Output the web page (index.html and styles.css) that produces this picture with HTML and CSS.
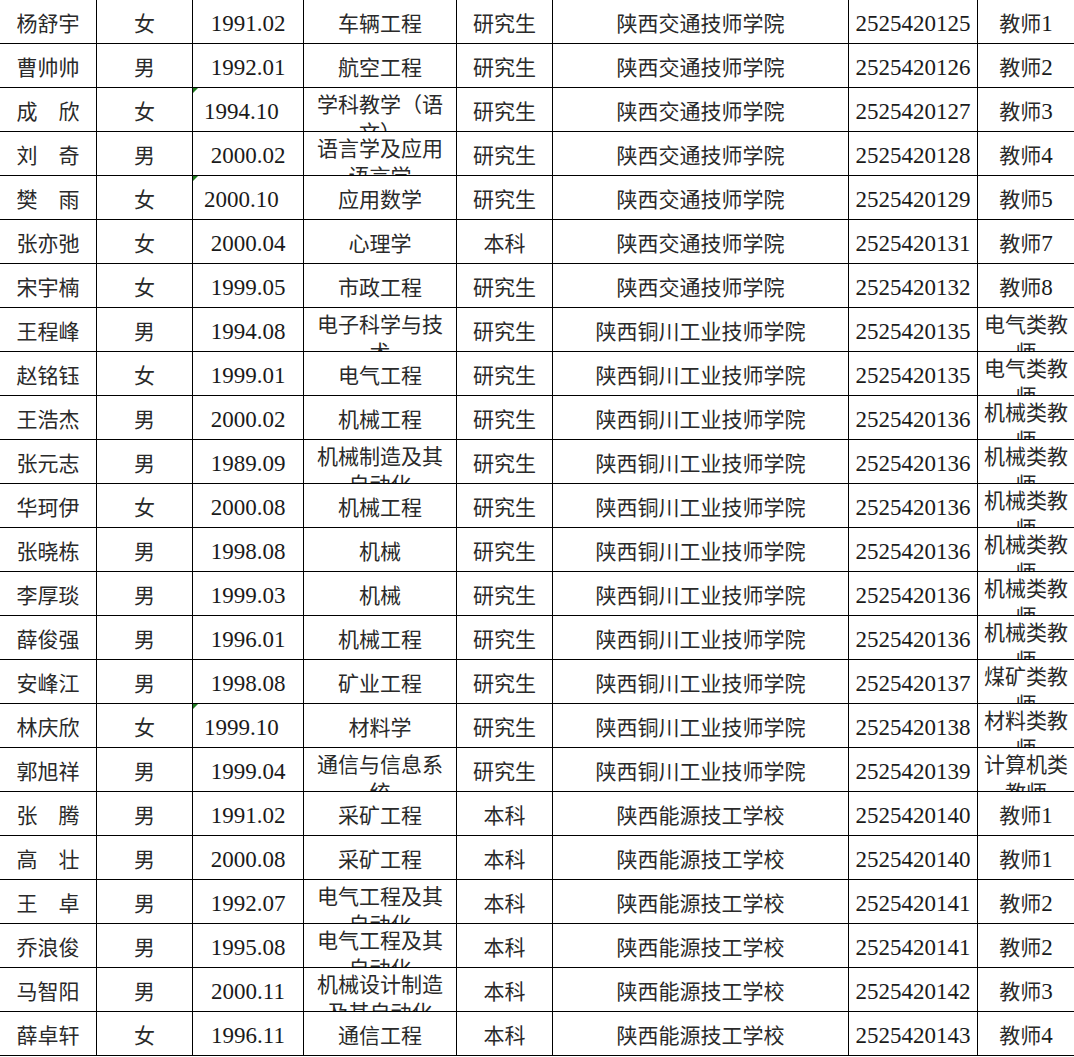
FILE: index.html
```html
<!DOCTYPE html>
<html lang="zh-CN">
<head>
<meta charset="utf-8">
<title>名单</title>
<link rel="stylesheet" href="styles.css">
</head>
<body>
<div class="sheet">
  <div class="row"><div class="c">杨舒宇</div><div class="c">女</div><div class="c"><span class="num">1991.02</span></div><div class="c">车辆工程</div><div class="c">研究生</div><div class="c">陕西交通技师学院</div><div class="c"><span class="num">2525420125</span></div><div class="c">教师<span class="num">1</span></div></div>
  <div class="row"><div class="c">曹帅帅</div><div class="c">男</div><div class="c"><span class="num">1992.01</span></div><div class="c">航空工程</div><div class="c">研究生</div><div class="c">陕西交通技师学院</div><div class="c"><span class="num">2525420126</span></div><div class="c">教师<span class="num">2</span></div></div>
  <div class="row"><div class="c">成　欣</div><div class="c">女</div><div class="c left"><span class="num">1994.10</span></div><div class="c wrap">学科教学（语文）</div><div class="c">研究生</div><div class="c">陕西交通技师学院</div><div class="c"><span class="num">2525420127</span></div><div class="c">教师<span class="num">3</span></div></div>
  <div class="row"><div class="c">刘　奇</div><div class="c">男</div><div class="c"><span class="num">2000.02</span></div><div class="c wrap">语言学及应用语言学</div><div class="c">研究生</div><div class="c">陕西交通技师学院</div><div class="c"><span class="num">2525420128</span></div><div class="c">教师<span class="num">4</span></div></div>
  <div class="row"><div class="c">樊　雨</div><div class="c">女</div><div class="c left"><span class="num">2000.10</span></div><div class="c">应用数学</div><div class="c">研究生</div><div class="c">陕西交通技师学院</div><div class="c"><span class="num">2525420129</span></div><div class="c">教师<span class="num">5</span></div></div>
  <div class="row"><div class="c">张亦弛</div><div class="c">女</div><div class="c"><span class="num">2000.04</span></div><div class="c">心理学</div><div class="c">本科</div><div class="c">陕西交通技师学院</div><div class="c"><span class="num">2525420131</span></div><div class="c">教师<span class="num">7</span></div></div>
  <div class="row"><div class="c">宋宇楠</div><div class="c">女</div><div class="c"><span class="num">1999.05</span></div><div class="c">市政工程</div><div class="c">研究生</div><div class="c">陕西交通技师学院</div><div class="c"><span class="num">2525420132</span></div><div class="c">教师<span class="num">8</span></div></div>
  <div class="row"><div class="c">王程峰</div><div class="c">男</div><div class="c"><span class="num">1994.08</span></div><div class="c wrap">电子科学与技术</div><div class="c">研究生</div><div class="c">陕西铜川工业技师学院</div><div class="c"><span class="num">2525420135</span></div><div class="c wrap">电气类教师</div></div>
  <div class="row"><div class="c">赵铭钰</div><div class="c">女</div><div class="c"><span class="num">1999.01</span></div><div class="c">电气工程</div><div class="c">研究生</div><div class="c">陕西铜川工业技师学院</div><div class="c"><span class="num">2525420135</span></div><div class="c wrap">电气类教师</div></div>
  <div class="row"><div class="c">王浩杰</div><div class="c">男</div><div class="c"><span class="num">2000.02</span></div><div class="c">机械工程</div><div class="c">研究生</div><div class="c">陕西铜川工业技师学院</div><div class="c"><span class="num">2525420136</span></div><div class="c wrap">机械类教师</div></div>
  <div class="row"><div class="c">张元志</div><div class="c">男</div><div class="c"><span class="num">1989.09</span></div><div class="c wrap">机械制造及其自动化</div><div class="c">研究生</div><div class="c">陕西铜川工业技师学院</div><div class="c"><span class="num">2525420136</span></div><div class="c wrap">机械类教师</div></div>
  <div class="row"><div class="c">华珂伊</div><div class="c">女</div><div class="c"><span class="num">2000.08</span></div><div class="c">机械工程</div><div class="c">研究生</div><div class="c">陕西铜川工业技师学院</div><div class="c"><span class="num">2525420136</span></div><div class="c wrap">机械类教师</div></div>
  <div class="row"><div class="c">张晓栋</div><div class="c">男</div><div class="c"><span class="num">1998.08</span></div><div class="c">机械</div><div class="c">研究生</div><div class="c">陕西铜川工业技师学院</div><div class="c"><span class="num">2525420136</span></div><div class="c wrap">机械类教师</div></div>
  <div class="row"><div class="c">李厚琰</div><div class="c">男</div><div class="c"><span class="num">1999.03</span></div><div class="c">机械</div><div class="c">研究生</div><div class="c">陕西铜川工业技师学院</div><div class="c"><span class="num">2525420136</span></div><div class="c wrap">机械类教师</div></div>
  <div class="row"><div class="c">薛俊强</div><div class="c">男</div><div class="c"><span class="num">1996.01</span></div><div class="c">机械工程</div><div class="c">研究生</div><div class="c">陕西铜川工业技师学院</div><div class="c"><span class="num">2525420136</span></div><div class="c wrap">机械类教师</div></div>
  <div class="row"><div class="c">安峰江</div><div class="c">男</div><div class="c"><span class="num">1998.08</span></div><div class="c">矿业工程</div><div class="c">研究生</div><div class="c">陕西铜川工业技师学院</div><div class="c"><span class="num">2525420137</span></div><div class="c wrap">煤矿类教师</div></div>
  <div class="row"><div class="c">林庆欣</div><div class="c">女</div><div class="c left"><span class="num">1999.10</span></div><div class="c">材料学</div><div class="c">研究生</div><div class="c">陕西铜川工业技师学院</div><div class="c"><span class="num">2525420138</span></div><div class="c wrap">材料类教师</div></div>
  <div class="row"><div class="c">郭旭祥</div><div class="c">男</div><div class="c"><span class="num">1999.04</span></div><div class="c wrap">通信与信息系统</div><div class="c">研究生</div><div class="c">陕西铜川工业技师学院</div><div class="c"><span class="num">2525420139</span></div><div class="c wrap">计算机类教师</div></div>
  <div class="row"><div class="c">张　腾</div><div class="c">男</div><div class="c"><span class="num">1991.02</span></div><div class="c">采矿工程</div><div class="c">本科</div><div class="c">陕西能源技工学校</div><div class="c"><span class="num">2525420140</span></div><div class="c">教师<span class="num">1</span></div></div>
  <div class="row"><div class="c">高　壮</div><div class="c">男</div><div class="c"><span class="num">2000.08</span></div><div class="c">采矿工程</div><div class="c">本科</div><div class="c">陕西能源技工学校</div><div class="c"><span class="num">2525420140</span></div><div class="c">教师<span class="num">1</span></div></div>
  <div class="row"><div class="c">王　卓</div><div class="c">男</div><div class="c"><span class="num">1992.07</span></div><div class="c wrap">电气工程及其自动化</div><div class="c">本科</div><div class="c">陕西能源技工学校</div><div class="c"><span class="num">2525420141</span></div><div class="c">教师<span class="num">2</span></div></div>
  <div class="row"><div class="c">乔浪俊</div><div class="c">男</div><div class="c"><span class="num">1995.08</span></div><div class="c wrap">电气工程及其自动化</div><div class="c">本科</div><div class="c">陕西能源技工学校</div><div class="c"><span class="num">2525420141</span></div><div class="c">教师<span class="num">2</span></div></div>
  <div class="row"><div class="c">马智阳</div><div class="c">男</div><div class="c"><span class="num">2000.11</span></div><div class="c wrap">机械设计制造及其自动化</div><div class="c">本科</div><div class="c">陕西能源技工学校</div><div class="c"><span class="num">2525420142</span></div><div class="c">教师<span class="num">3</span></div></div>
  <div class="row"><div class="c">薛卓轩</div><div class="c">女</div><div class="c"><span class="num">1996.11</span></div><div class="c">通信工程</div><div class="c">本科</div><div class="c">陕西能源技工学校</div><div class="c"><span class="num">2525420143</span></div><div class="c">教师<span class="num">4</span></div></div>
</div>
</body>
</html>
```

FILE: styles.css
```css
html, body {
  margin: 0;
  padding: 0;
  background: #ffffff;
}

.sheet {
  width: 1074px;
  display: flex;
  flex-direction: column;
  font-family: "Noto Sans CJK SC", "Noto Sans CJK JP", sans-serif;
  font-size: 21px;
  color: #2a2a2a;
}

.row {
  display: grid;
  grid-template-columns: 97px 96px 111px 153px 96px 296px 129px 96px;
}

.c {
  position: relative;
  height: 44px;
  box-sizing: border-box;
  border-right: 1px solid #000000;
  border-bottom: 1px solid #000000;
  overflow: hidden;
  padding: 8px 3px 0;
  line-height: 28px;
  text-align: center;
  white-space: normal;
}

.c:last-child {
  border-right: none;
}

.wrap {
  padding-top: 1px;
}

.left {
  text-align: left;
  padding-left: 11px;
}

.left::before {
  content: "";
  position: absolute;
  top: 0;
  left: 0;
  width: 0;
  height: 0;
  border-top: 5px solid #1f7a1f;
  border-right: 5px solid transparent;
}

.num {
  font-family: "Liberation Serif", serif;
  font-size: 23px;
  line-height: 28px;
  color: #1a1a1a;
}
```
